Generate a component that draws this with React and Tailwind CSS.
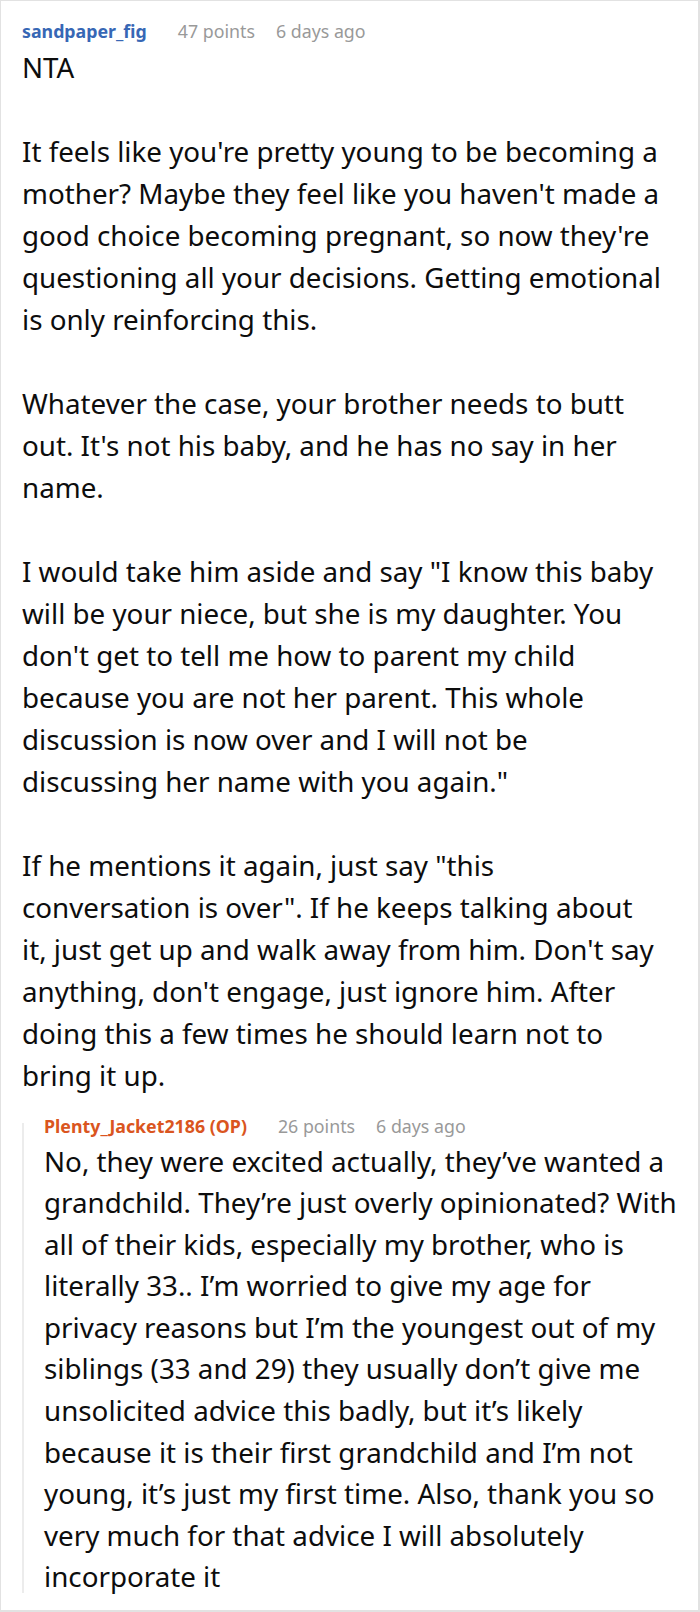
import React from "react";

const mainParas = [
  ["NTA"],
  [
    "It feels like you're pretty young to be becoming a",
    "mother? Maybe they feel like you haven't made a",
    "good choice becoming pregnant, so now they're",
    "questioning all your decisions. Getting emotional",
    "is only reinforcing this.",
  ],
  [
    "Whatever the case, your brother needs to butt",
    "out. It's not his baby, and he has no say in her",
    "name.",
  ],
  [
    "I would take him aside and say \"I know this baby",
    "will be your niece, but she is my daughter. You",
    "don't get to tell me how to parent my child",
    "because you are not her parent. This whole",
    "discussion is now over and I will not be",
    "discussing her name with you again.\"",
  ],
  [
    "If he mentions it again, just say \"this",
    "conversation is over\". If he keeps talking about",
    "it, just get up and walk away from him. Don't say",
    "anything, don't engage, just ignore him. After",
    "doing this a few times he should learn not to",
    "bring it up.",
  ],
];

const replyLines = [
  "No, they were excited actually, they\u2019ve wanted a",
  "grandchild. They\u2019re just overly opinionated? With",
  "all of their kids, especially my brother, who is",
  "literally 33.. I\u2019m worried to give my age for",
  "privacy reasons but I\u2019m the youngest out of my",
  "siblings (33 and 29) they usually don\u2019t give me",
  "unsolicited advice this badly, but it\u2019s likely",
  "because it is their first grandchild and I\u2019m not",
  "young, it\u2019s just my first time. Also, thank you so",
  "very much for that advice I will absolutely",
  "incorporate it",
];

function Lines({ lines }) {
  return lines.map((l, i) => (
    <React.Fragment key={i}>
      {l}
      {i < lines.length - 1 && <br />}
    </React.Fragment>
  ));
}

function Meta({ name, color, points, time }) {
  return (
    <div className="flex items-center text-[17.8px] leading-[24px] whitespace-nowrap">
      <span className={`font-bold ${color}`}>{name}</span>
      <span className="ml-[31px] text-[#999999]">{points}</span>
      <span className="ml-[21px] text-[#999999]">{time}</span>
    </div>
  );
}

export default function App() {
  return (
    <div
      className="w-[700px] h-[1612px] bg-white border-t border-l border-r-2 border-b-2 border-[#e2e2e2] pl-[21px] pr-[20px] pt-[18px] overflow-hidden"
      style={{ fontFamily: '"Noto Sans", "Open Sans", Arial, sans-serif' }}
    >
      <Meta name="sandpaper_fig" color="text-[#3767b5]" points="47 points" time="6 days ago" />
      <div className="mt-[3px] text-[27.75px] leading-[42px] text-[#0d0d0d] flex flex-col gap-[42px] whitespace-nowrap">
        {mainParas.map((p, i) => (
          <p key={i}>
            <Lines lines={p} />
          </p>
        ))}
      </div>
      <div className="relative mt-[18px] pl-[22px]">
        <div className="absolute left-0 top-[9px] bottom-[5px] w-[2px] bg-[#ececec]" />
        <Meta name="Plenty_Jacket2186 (OP)" color="text-[#da5520]" points="26 points" time="6 days ago" />
        <p className="mt-[2.5px] text-[27.75px] leading-[41.6px] text-[#0d0d0d] whitespace-nowrap">
          <Lines lines={replyLines} />
        </p>
      </div>
    </div>
  );
}
